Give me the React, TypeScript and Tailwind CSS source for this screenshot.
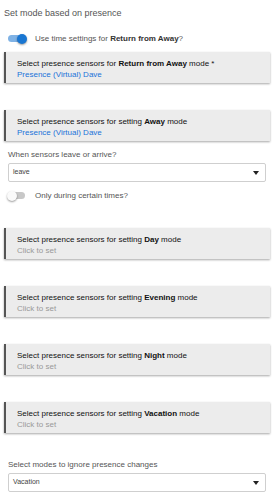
import React from 'react'

function Toggle({ on }: { on: boolean }) {
  return (
    <div className="relative w-[18px] h-[12px] flex items-center">
      <div className={`w-[17px] h-[7px] rounded-full ${on ? 'bg-[#7fb2e5]' : 'bg-[#c8c8c8]'}`} />
      <div
        className={`absolute top-[1px] w-[10px] h-[10px] rounded-full shadow-[0_1px_2px_rgba(0,0,0,0.4)] ${
          on ? 'left-[9px] bg-[#1976d2]' : 'left-[-1px] bg-[#fafafa]'
        }`}
      />
    </div>
  )
}

function SensorBox({ label, value, star, setting = true }: { label: string; value?: string; star?: boolean; setting?: boolean }) {
  return (
    <div className="mx-[4px] h-[31px] bg-[#ececec] border-l-2 border-[#555] shadow-[0_1px_2px_rgba(0,0,0,0.35)] pl-[11px] pt-[6px] text-[8px] leading-[11px]">
      <div className="text-[#111]">
        Select presence sensors for {setting ? 'setting ' : ''}
        <b>{label}</b> mode{star ? ' *' : ''}
      </div>
      <div className={value ? 'text-[#1a73d9]' : 'text-[#999]'}>{value ?? 'Click to set'}</div>
    </div>
  )
}

function Select({ value }: { value: string }) {
  return (
    <div className="mx-[8px] h-[19px] border border-[#cfcfcf] rounded-[2px] flex items-center justify-between px-[4px] text-[7px] text-[#444]">
      <span>{value}</span>
      <svg width="6" height="4" viewBox="0 0 6 4" className="mr-[2px]">
        <path d="M0 0 L6 0 L3 4 Z" fill="#222" />
      </svg>
    </div>
  )
}

export default function App() {
  return (
    <div className="w-[274px] h-[499px] bg-white overflow-hidden font-['Liberation_Sans',Arial,sans-serif]">
      {/* Header */}
      <div className="pt-[7px] pl-[4px] text-[9px] leading-[12px] text-[#555]">Set mode based on presence</div>

      <div className="flex items-center mt-[13px] pl-[8px] h-[13px]">
        <Toggle on />
        <span className="ml-[9px] text-[8px] text-[#555]">
          Use time settings for <b className="text-[#333]">Return from Away</b>?
        </span>
      </div>

      <div className="mt-[7px]">
        <SensorBox label="Return from Away" value="Presence (Virtual) Dave" star setting={false} />
      </div>

      <div className="mt-[27px]">
        <SensorBox label="Away" value="Presence (Virtual) Dave" />
      </div>

      <div className="mt-[8px] pl-[8px] text-[8px] leading-[11px] text-[#555]">When sensors leave or arrive?</div>
      <div className="mt-[3px]">
        <Select value="leave" />
      </div>

      <div className="flex items-center mt-[7px] pl-[8px] h-[13px]">
        <Toggle on={false} />
        <span className="ml-[9px] text-[8px] text-[#555]">Only during certain times?</span>
      </div>

      <div className="mt-[26px] flex flex-col gap-[27px]">
        <SensorBox label="Day" />
        <SensorBox label="Evening" />
        <SensorBox label="Night" />
        <SensorBox label="Vacation" />
      </div>

      <div className="mt-[26px] pl-[8px] text-[8px] leading-[11px] text-[#555]">Select modes to ignore presence changes</div>
      <div className="mt-[3px]">
        <Select value="Vacation" />
      </div>
    </div>
  )
}
